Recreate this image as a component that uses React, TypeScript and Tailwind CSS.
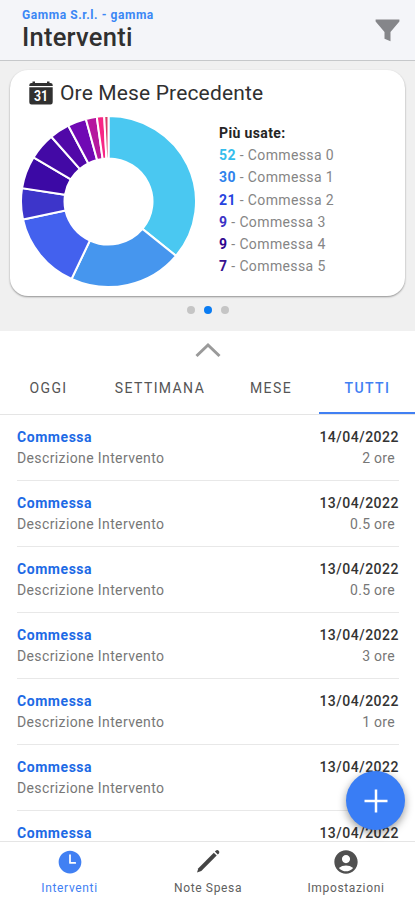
import React from "react";
import { IoTime } from "react-icons/io5";
import { MdAccountCircle } from "react-icons/md";

const slices = [
  { from: 0, to: 129.5, color: "#4ac8f1" },
  { from: 129.5, to: 205, color: "#4696ee" },
  { from: 205, to: 257.8, color: "#4361ee" },
  { from: 257.8, to: 279, color: "#3d35ca" },
  { from: 279, to: 301, color: "#3c09a5" },
  { from: 301, to: 319.2, color: "#4309a5" },
  { from: 319.2, to: 332.6, color: "#5108a8" },
  { from: 332.6, to: 345, color: "#7009b4" },
  { from: 345, to: 352.3, color: "#b5179e" },
  { from: 352.3, to: 357.2, color: "#f72585" },
  { from: 357.2, to: 360, color: "#d63c69" },
];

function point(rx: number, ry: number, angle: number) {
  const a = ((angle - 90) * Math.PI) / 180;
  return `${88.5 + rx * Math.cos(a)} ${85.5 + ry * Math.sin(a)}`;
}

function slicePath(from: number, to: number) {
  const large = to - from > 180 ? 1 : 0;
  return `M${point(87.5, 85.5, from)}A87.5 85.5 0 ${large} 1 ${point(87.5, 85.5, to)}L${point(44, 43, to)}A44 43 0 ${large} 0 ${point(44, 43, from)}Z`;
}

const legend = [
  { n: 52, color: "text-[#35bdec]" },
  { n: 30, color: "text-[#2f83ec]" },
  { n: 21, color: "text-[#2643df]" },
  { n: 9, color: "text-[#3b32c5]" },
  { n: 9, color: "text-[#30068f]" },
  { n: 7, color: "text-[#38118f]" },
];

const rows = [
  { text: "Descrizione Intervento", date: "14/04/2022", hours: "2 ore" },
  { text: "Descrizione Intervento", date: "13/04/2022", hours: "0.5 ore" },
  { text: "Descrizione Intervento", date: "13/04/2022", hours: "0.5 ore" },
  { text: "Descrizione Intervento", date: "13/04/2022", hours: "3 ore" },
  { text: "Descrizione Intervento", date: "13/04/2022", hours: "1 ore" },
  { text: "Descrizione Intervento", date: "13/04/2022", hours: "" },
  { text: "", date: "13/04/2022", hours: "" },
];

function FunnelIcon() {
  return (
    <svg className="mt-[19px] mr-[2px]" width="25" height="23" viewBox="0 0 25 23" fill="#85868a">
      <path d="M0.600 0.500H24.400V2.600L15.500 13V22.300L9.500 19.800V13L0.600 2.600Z" />
    </svg>
  );
}

function CalendarIcon() {
  return (
    <svg width="24" height="24" viewBox="0 0 24 24" fill="#303030">
      <path d="M2.500 2h1V0.500h2.500V2h12V0.500h2.500V2h1Q23.700 2 23.700 4V5H0.300V4Q.3 2 2.500 2zM0.300 6.200H23.700V21.300Q23.700 23.500 21.500 23.500H2.500Q.3 23.500 .3 21.300z" />
      <text x="12" y="20" textAnchor="middle" fill="#fff" fontFamily="Roboto" fontWeight="700" fontSize="14.500" textLength="14" lengthAdjust="spacingAndGlyphs">31</text>
    </svg>
  );
}

function PencilIcon() {
  return (
    <svg width="28" height="28" viewBox="0 0 28 28" fill="#444">
      <path d="M19.800 4.700L22.700 7.600L7.300 23L3 24.500L4.400 20.200Z" />
      <path d="M20.900 3.600L22 2.500Q23.300 1.400 24.700 2.700Q26 4.100 24.900 5.400L23.800 6.500Z" />
    </svg>
  );
}

export default function App() {
  return (
    <div className="relative flex h-[900px] w-full flex-col overflow-hidden bg-white font-[Roboto,sans-serif] text-[#303030]">
      <header className="flex h-[61px] shrink-0 items-start justify-between border-b border-[#c6c8ca] bg-[#f4f5f9] pr-[13px] pl-[22px] shadow-[0_1px_2px_rgba(0,0,0,0.12)]">
        <div className="pt-[8px] whitespace-nowrap">
          <div className="text-[12px] leading-[14px] font-bold tracking-[0.57px] text-[#3b87f5]">Gamma S.r.l. - gamma</div>
          <h1 className="text-[25.500px] leading-[31px] font-medium tracking-[0.25px]">Interventi</h1>
        </div>
        <FunnelIcon />
      </header>

      <section className="h-[270px] shrink-0 bg-[#f0f0f0] px-[10px] pt-[9px]">
        <div className="h-[226px] rounded-[18px] bg-white shadow-[0_1px_2px_rgba(0,0,0,0.4)]">
          <div className="flex h-[45px] items-center gap-[7px] pl-[19px]">
            <CalendarIcon />
            <h2 className="text-[21px] leading-[26px] tracking-[0.15px] whitespace-nowrap">Ore Mese Precedente</h2>
          </div>
          <div className="flex">
            <svg className="ml-[10px] shrink-0" width="178" height="174" viewBox="0 -1 178 174">
              {slices.map((s) => (
                <path key={s.from} d={slicePath(s.from, s.to)} fill={s.color} stroke="#fff" strokeWidth="2" />
              ))}
            </svg>
            <div className="ml-[21px] pt-[7px] text-[14px] leading-[22.2px] tracking-[0.38px] whitespace-nowrap text-[#858585]">
              <div className="font-bold text-[#252525]">Più usate:</div>
              {legend.map((l, i) => (
                <div key={i}>
                  <span className={`font-bold ${l.color}`}>{l.n}</span> - Commessa {i}
                </div>
              ))}
            </div>
          </div>
        </div>
        <div className="flex justify-center gap-[9px] pt-[9.500px]">
          <span className="size-2 rounded-full bg-[#c5c5c5]" />
          <span className="size-2 rounded-full bg-[#0a7cf2]" />
          <span className="size-2 rounded-full bg-[#c5c5c5]" />
        </div>
      </section>

      <div className="flex h-[36px] shrink-0 justify-center pt-[11px]">
        <svg width="26" height="16" viewBox="0 0 26 16" fill="none" stroke="#9a9a9a" strokeWidth="3">
          <path d="M1.500 14L13 3L24.500 14" />
        </svg>
      </div>
      <nav className="flex h-[48px] shrink-0 border-b border-[#e5e5e5] text-center text-[14px] leading-[42px] tracking-[1.4px] text-[#555]">
        <span className="w-[97px]">OGGI</span>
        <span className="w-[126px]">SETTIMANA</span>
        <span className="w-[96px]">MESE</span>
        <span className="h-[47px] w-[96px] border-b-2 border-[#4180f3] pl-px font-medium text-[#4180f3]">TUTTI</span>
      </nav>

      <main className="min-h-0 flex-1 overflow-hidden pr-[16px] pl-[17px]">
        {rows.map((r, i) => (
          <div key={i} className="flex h-[66px] justify-between border-b border-[#e8e8e8] pt-[11px] whitespace-nowrap">
            <div>
              <div className="text-[14px] leading-[22px] font-bold tracking-[0.55px] text-[#1d6ae5]">Commessa</div>
              <div className="text-[14px] leading-[21px] tracking-[0.38px] text-[#777]">{r.text}</div>
            </div>
            <div className="text-right">
              <div className="text-[14px] leading-[22px] font-medium tracking-[0.5px] text-[#333]">{r.date}</div>
              <div className="pr-[4px] text-[14px] leading-[21px] tracking-[0.3px] text-[#777]">{r.hours}</div>
            </div>
          </div>
        ))}
      </main>

      <footer className="flex h-[59px] shrink-0 border-t border-[#e5e5e5] bg-white text-[12px] leading-[14px] tracking-[0.65px] text-[#606060]">
        <div className="flex w-[139px] flex-col items-center gap-[5px] pt-[6px] text-[#4180f3]">
          <IoTime className="size-[28px]" />
          <span>Interventi</span>
        </div>
        <div className="flex w-[138px] flex-col items-center gap-[5px] pt-[6px]">
          <PencilIcon />
          <span>Note Spesa</span>
        </div>
        <div className="flex w-[138px] flex-col items-center gap-[5px] pt-[6px]">
          <MdAccountCircle className="size-[28px] text-[#505050]" />
          <span>Impostazioni</span>
        </div>
      </footer>

      <button className="absolute top-[771px] left-[346px] flex size-[59px] items-center justify-center rounded-full bg-[#397df5] shadow-[0_3px_8px_rgba(0,0,0,0.4)]">
        <svg width="24" height="24" viewBox="0 0 24 24" stroke="#fff" strokeWidth="2.500">
          <path d="M12 0.500V23.500M0.500 12H23.500" />
        </svg>
      </button>
    </div>
  );
}
